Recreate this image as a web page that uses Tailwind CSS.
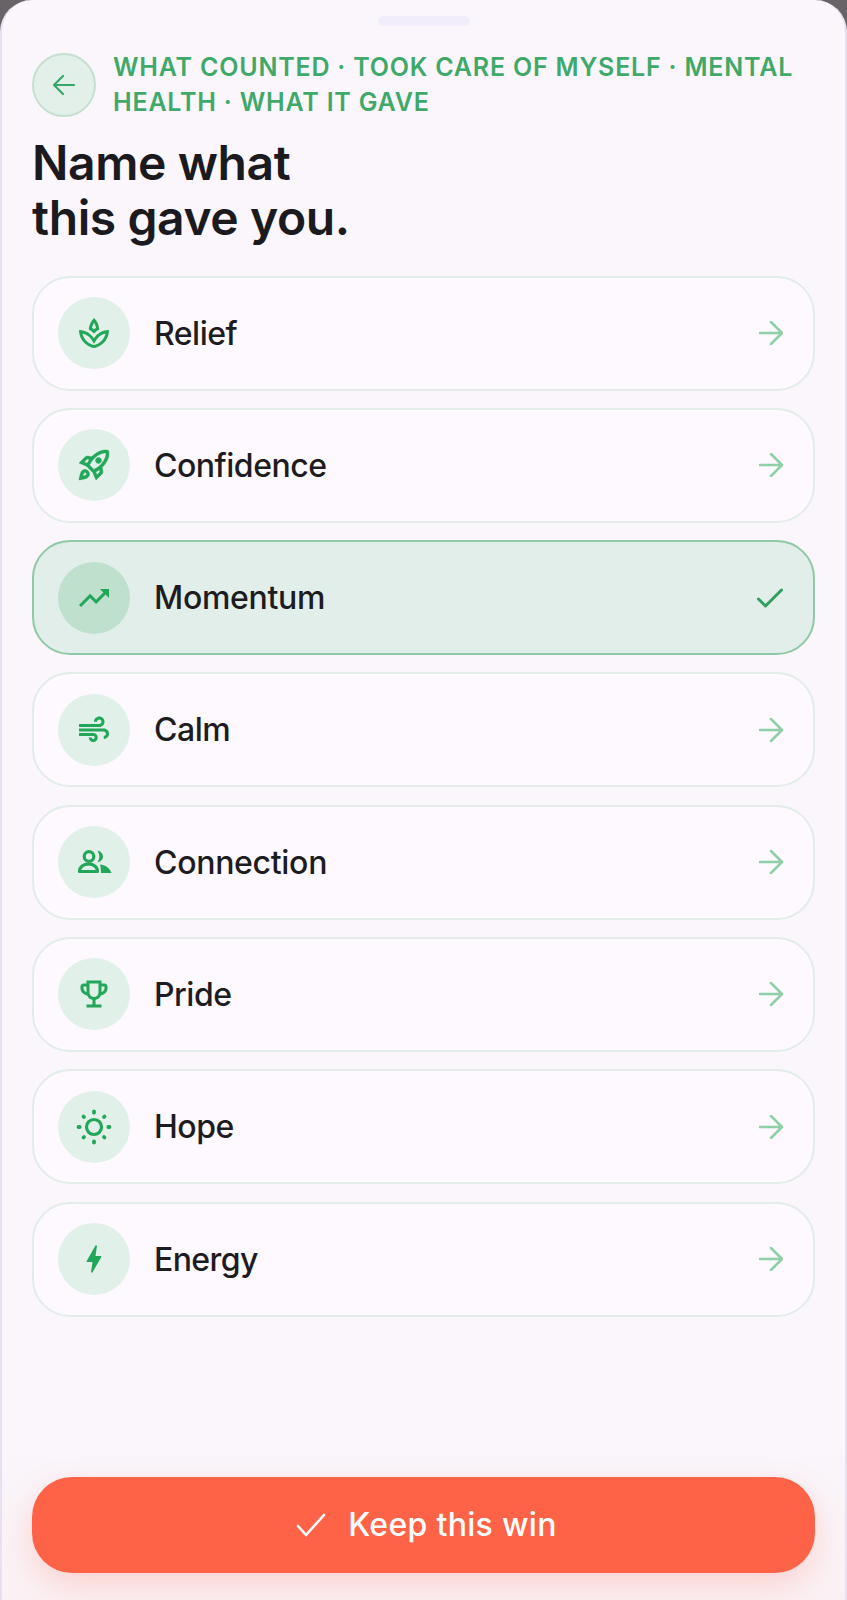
<!DOCTYPE html>
<html>
<head>
<meta charset="utf-8">
<script src="https://cdn.jsdelivr.net/npm/@tailwindcss/browser@4"></script>
</head>
<body class="bg-[#676367]">
<main class="relative flex h-[1600px] w-[847px] flex-col overflow-hidden rounded-t-[32px] border-x-2 border-[#e6e2f0] bg-[linear-gradient(to_bottom,#faf6fc_0%,#faf6fc_90%,#fbf1f4_100%)] px-[30px] font-['Inter',sans-serif]">
  <div class="mx-auto mt-[16px] h-[10px] w-[92px] rounded-full bg-[#f1edfb]"></div>
  <header class="mt-[24px] flex items-center gap-[17px]">
    <button class="flex h-[64px] w-[64px] shrink-0 items-center justify-center rounded-full border-2 border-[#c5e0d0] bg-[#e2f0e9]">
      <svg class="h-[22px] w-[22px]" viewBox="0 0 22 22" fill="none" stroke="#3aa76a" stroke-width="2.2" stroke-linecap="round" stroke-linejoin="round"><path d="M21 11H1M10 2l-9 9 9 9"/></svg>
    </button>
    <p class="text-[25px] leading-[35px] font-semibold tracking-[0.8px] text-[#3fa969]">WHAT COUNTED · TOOK CARE OF MYSELF · MENTAL HEALTH · WHAT IT GAVE</p>
  </header>
  <h1 class="mt-[15px] text-[48px] leading-[55px] font-semibold tracking-[-0.4px] text-[#1b1a1f]">Name what<br>this gave you.</h1>
  <ul class="mt-[30.5px] flex flex-col gap-[17.3px]">
    <li class="flex h-[115px] items-center rounded-[38px] border-2 border-[#e3ece9] bg-[#fdf9fe] pr-[30px] pl-[24px]">
      <span class="flex h-[72px] w-[72px] items-center justify-center rounded-full bg-[#e1f0e8]"><svg class="h-[36px] w-[36px]" viewBox="0 0 24 24" fill="#22a659"><path d="M15.49 9.63c-.18-2.79-1.31-5.51-3.43-7.63-2.14 2.14-3.32 4.86-3.55 7.63 1.28.68 2.46 1.56 3.49 2.63 1.03-1.06 2.21-1.94 3.49-2.63zm-3.44-4.44c.63 1.03 1.07 2.18 1.3 3.38-.47.3-.91.63-1.34.98-.42-.34-.87-.67-1.33-.97.25-1.2.71-2.35 1.37-3.39zM12 15.45c-.82-1.25-1.86-2.34-3.06-3.2-.13-.09-.27-.16-.4-.26.13.09.27.17.39.25C6.98 10.83 4.59 10 2 10c0 5.32 3.36 9.82 8.03 11.49.63.23 1.29.4 1.97.51.68-.12 1.33-.29 1.97-.51C18.64 19.82 22 15.32 22 10c-4.18 0-7.85 2.17-10 5.45zm1.32 4.15c-.44.15-.88.27-1.33.37-.44-.09-.87-.21-1.28-.36-3.29-1.18-5.7-3.99-6.45-7.35 1.1.26 2.15.71 3.12 1.33l-.02.01c.13.09.26.18.39.25l.07.04c.99.72 1.84 1.61 2.51 2.65L12 19.1l1.67-2.55c.69-1.05 1.55-1.95 2.53-2.66l.07-.05c.09-.05.18-.11.27-.17l-.01-.02c.98-.65 2.07-1.13 3.21-1.4-.75 3.37-3.15 6.18-6.42 7.35z"/></svg></span>
      <span class="ml-[24px] flex-1 pt-[1px] text-[32px] font-[450] tracking-[-0.5px] text-[#1d1c21]">Relief</span>
      <svg class="h-[24px] w-[24px]" viewBox="0 0 24 24" fill="none" stroke="#8fd0a8" stroke-width="2.6" stroke-linecap="round" stroke-linejoin="round"><path d="M1 12h22M12 1l11 11-11 11"/></svg>
    </li>
    <li class="flex h-[115px] items-center rounded-[38px] border-2 border-[#e3ece9] bg-[#fdf9fe] pr-[30px] pl-[24px]">
      <span class="flex h-[72px] w-[72px] items-center justify-center rounded-full bg-[#e1f0e8]"><svg class="h-[36px] w-[36px]" viewBox="0 0 24 24" fill="#22a659" stroke="#22a659" stroke-width="0.3"><path d="M6 15c-.83 0-1.58.34-2.12.88C2.7 17.06 2 22 2 22s4.94-.7 6.12-1.88c.54-.54.88-1.29.88-2.12 0-1.66-1.34-3-3-3zm.71 3.71c-.28.28-2.17.76-2.17.76s.47-1.88.76-2.17c.17-.19.42-.3.7-.3.55 0 1 .45 1 1 0 .28-.11.53-.29.71zm10.71-5.06c6.36-6.36 4.24-11.31 4.24-11.31S16.71.22 10.35 6.58l-2.49-.5c-.65-.13-1.33.08-1.81.55L2 10.69l5 2.14L11.17 17l2.14 5 4.05-4.05c.47-.47.68-1.15.55-1.81l-.49-2.49zM7.41 10.83l-1.91-.82 1.97-1.97 1.44.29c-.57.83-1.08 1.7-1.5 2.5zm6.58 7.67l-.82-1.91c.8-.42 1.67-.93 2.49-1.5l.29 1.44-1.96 1.97zM16 12.24c-1.32 1.32-3.38 2.4-4.04 2.73l-2.93-2.93c.32-.65 1.4-2.71 2.73-4.04 4.68-4.68 8.23-3.99 8.23-3.99s.69 3.55-3.99 8.23zM15 11c1.1 0 2-.9 2-2s-.9-2-2-2-2 .9-2 2 .9 2 2 2z"/></svg></span>
      <span class="ml-[24px] flex-1 pt-[1px] text-[32px] font-[450] tracking-[-0.5px] text-[#1d1c21]">Confidence</span>
      <svg class="h-[24px] w-[24px]" viewBox="0 0 24 24" fill="none" stroke="#8fd0a8" stroke-width="2.6" stroke-linecap="round" stroke-linejoin="round"><path d="M1 12h22M12 1l11 11-11 11"/></svg>
    </li>
    <li class="flex h-[115px] items-center rounded-[38px] border-2 border-[#90c9a5] bg-[#e2eee9] pr-[30px] pl-[24px]">
      <span class="flex h-[72px] w-[72px] items-center justify-center rounded-full bg-[#bfe0cd]"><svg class="h-[36px] w-[36px]" viewBox="0 0 24 24" fill="#22a659"><path d="M16 6l2.29 2.29-4.88 4.88-4-4L2 16.59 3.41 18l6-6 4 4 6.3-6.29L22 12V6z"/></svg></span>
      <span class="ml-[24px] flex-1 pt-[1px] text-[32px] font-medium tracking-[-0.3px] text-[#1d1c21]">Momentum</span>
      <svg class="h-[20px] w-[26px]" viewBox="0 0 26 20" fill="none" stroke="#2f9e5f" stroke-width="3" stroke-linecap="round" stroke-linejoin="round"><path d="M1.5 11l7 7L24.5 2"/></svg>
    </li>
    <li class="flex h-[115px] items-center rounded-[38px] border-2 border-[#e3ece9] bg-[#fdf9fe] pr-[30px] pl-[24px]">
      <span class="flex h-[72px] w-[72px] items-center justify-center rounded-full bg-[#e1f0e8]"><svg class="h-[36px] w-[36px]" viewBox="0 0 24 24" fill="#22a659"><path d="M14.5 17c0 1.65-1.35 3-3 3s-3-1.35-3-3h2c0 .55.45 1 1 1s1-.45 1-1-.45-1-1-1H2v-2h9.5c1.65 0 3 1.35 3 3zM19 6.5C19 4.57 17.43 3 15.5 3S12 4.57 12 6.5h2c0-.83.67-1.5 1.5-1.5s1.5.67 1.5 1.5S16.33 8 15.5 8H2v2h13.5c1.93 0 3.5-1.57 3.5-3.5zm-.5 4.5H2v2h16.5c.83 0 1.5.67 1.5 1.5s-.67 1.5-1.5 1.5v2c1.93 0 3.5-1.57 3.5-3.5S20.43 11 18.5 11z"/></svg></span>
      <span class="ml-[24px] flex-1 pt-[1px] text-[32px] font-[450] tracking-[-0.5px] text-[#1d1c21]">Calm</span>
      <svg class="h-[24px] w-[24px]" viewBox="0 0 24 24" fill="none" stroke="#8fd0a8" stroke-width="2.6" stroke-linecap="round" stroke-linejoin="round"><path d="M1 12h22M12 1l11 11-11 11"/></svg>
    </li>
    <li class="flex h-[115px] items-center rounded-[38px] border-2 border-[#e3ece9] bg-[#fdf9fe] pr-[30px] pl-[24px]">
      <span class="flex h-[72px] w-[72px] items-center justify-center rounded-full bg-[#e1f0e8]"><svg class="h-[36px] w-[36px]" viewBox="0 0 36 36" fill="none" stroke="#22a659" stroke-width="3.2" stroke-linejoin="round"><circle cx="13" cy="12.5" r="4.8"/><path d="M3.5 27.5c0-4.5 4-7.5 9-7.5s9 3 9 7.5z"/><path fill="#22a659" stroke="none" d="M21.5 6.8c3.2.3 5.5 2.8 5.5 5.7s-2.300 5.400-5.500 5.700c1.100-1.600 1.800-3.600 1.800-5.700s-.7-4.100-1.800-5.700zM24 20.500c5 .5 10 3.500 11.500 8.500H25c0-3.500-.3-6-1-8.500z"/></svg></span>
      <span class="ml-[24px] flex-1 pt-[1px] text-[32px] font-[450] tracking-[-0.3px] text-[#1d1c21]">Connection</span>
      <svg class="h-[24px] w-[24px]" viewBox="0 0 24 24" fill="none" stroke="#8fd0a8" stroke-width="2.6" stroke-linecap="round" stroke-linejoin="round"><path d="M1 12h22M12 1l11 11-11 11"/></svg>
    </li>
    <li class="flex h-[115px] items-center rounded-[38px] border-2 border-[#e3ece9] bg-[#fdf9fe] pr-[30px] pl-[24px]">
      <span class="flex h-[72px] w-[72px] items-center justify-center rounded-full bg-[#e1f0e8]"><svg class="h-[36px] w-[36px]" viewBox="0 0 24 24" fill="#22a659"><path d="M19 5h-2V3H7v2H5c-1.1 0-2 .9-2 2v1c0 2.55 1.92 4.63 4.39 4.94.63 1.5 1.98 2.63 3.61 2.96V19H7v2h10v-2h-4v-3.1c1.63-.33 2.98-1.46 3.61-2.96C19.08 12.63 21 10.55 21 8V7c0-1.1-.9-2-2-2zM5 8V7h2v3.82C5.84 10.4 5 9.3 5 8zm7 6c-1.65 0-3-1.35-3-3V5h6v6c0 1.65-1.35 3-3 3zm7-6c0 1.3-.84 2.4-2 2.82V7h2v1z"/></svg></span>
      <span class="ml-[24px] flex-1 pt-[1px] text-[32px] font-[450] tracking-[-0.5px] text-[#1d1c21]">Pride</span>
      <svg class="h-[24px] w-[24px]" viewBox="0 0 24 24" fill="none" stroke="#8fd0a8" stroke-width="2.6" stroke-linecap="round" stroke-linejoin="round"><path d="M1 12h22M12 1l11 11-11 11"/></svg>
    </li>
    <li class="flex h-[115px] items-center rounded-[38px] border-2 border-[#e3ece9] bg-[#fdf9fe] pr-[30px] pl-[24px]">
      <span class="flex h-[72px] w-[72px] items-center justify-center rounded-full bg-[#e1f0e8]"><svg class="h-[36px] w-[36px]" viewBox="0 0 36 36" fill="none" stroke="#22a659" stroke-linecap="round"><circle cx="18" cy="18" r="7.5" stroke-width="3.2"/><path stroke-width="3.8" d="M18 2.500v1.200M18 32.300v1.200M2.500 18h1.200M32.300 18h1.200M7.500 7.500l.5.5M28 28l.5.5M7.500 28.500l.5-.5M28 8l.5-.5"/></svg></span>
      <span class="ml-[24px] flex-1 pt-[1px] text-[32px] font-[450] tracking-[-0.5px] text-[#1d1c21]">Hope</span>
      <svg class="h-[24px] w-[24px]" viewBox="0 0 24 24" fill="none" stroke="#8fd0a8" stroke-width="2.6" stroke-linecap="round" stroke-linejoin="round"><path d="M1 12h22M12 1l11 11-11 11"/></svg>
    </li>
    <li class="flex h-[115px] items-center rounded-[38px] border-2 border-[#e3ece9] bg-[#fdf9fe] pr-[30px] pl-[24px]">
      <span class="flex h-[72px] w-[72px] items-center justify-center rounded-full bg-[#e1f0e8]"><svg class="h-[36px] w-[36px]" viewBox="0 0 24 24" fill="#22a659"><path d="M11 21h-1l1-7H7.500c-.58 0-.57-.32-.38-.66.19-.34.05-.08.07-.12C8.480 10.940 10.420 7.540 13 3h1l-1 7h3.500c.49 0 .56.33.47.51l-.07.15C12.960 17.550 11 21 11 21z"/></svg></span>
      <span class="ml-[24px] flex-1 pt-[1px] text-[32px] font-[450] tracking-[-0.6px] text-[#1d1c21]">Energy</span>
      <svg class="h-[24px] w-[24px]" viewBox="0 0 24 24" fill="none" stroke="#8fd0a8" stroke-width="2.6" stroke-linecap="round" stroke-linejoin="round"><path d="M1 12h22M12 1l11 11-11 11"/></svg>
    </li>
  </ul>
  <button class="mt-auto mb-[27px] flex h-[96px] w-full shrink-0 items-center justify-center gap-[22px] rounded-[40px] bg-[#ff6347] pl-[6px] text-[32px] font-medium tracking-[0.3px] text-white shadow-[0_12px_32px_rgba(255,99,71,0.22)]">
    <svg class="h-[24px] w-[30px]" viewBox="0 0 30 24" fill="none" stroke="#fff" stroke-width="2.6" stroke-linecap="round" stroke-linejoin="round"><path d="M2 13l8 9L28 2"/></svg>
    Keep this win
  </button>
</main>
</body>
</html>
